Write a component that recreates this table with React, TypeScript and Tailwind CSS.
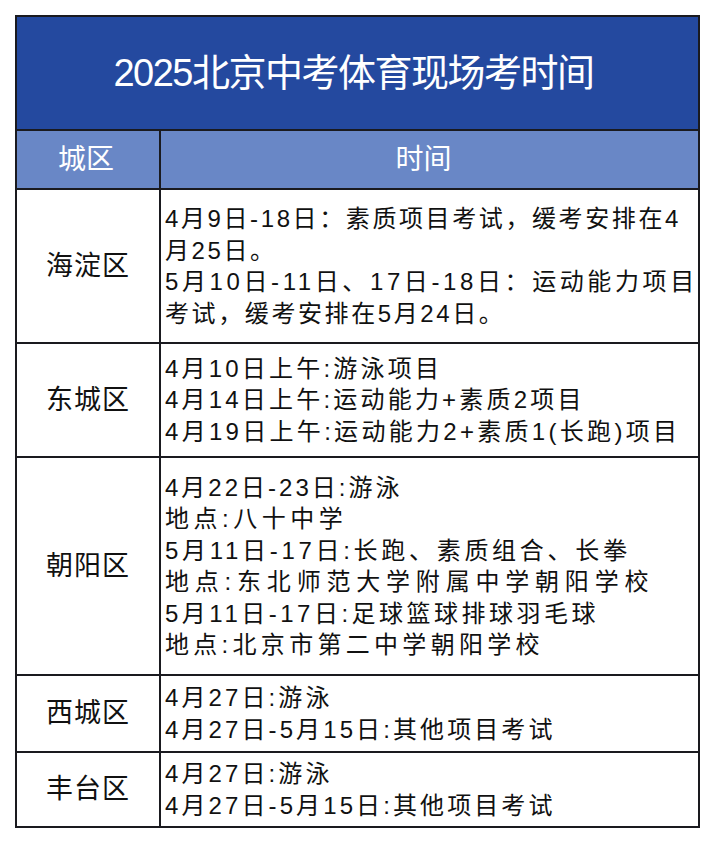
import React from "react";

type Line = [string, string];
type Row = { name: string; h: string; lines: Line[] };

const rows: Row[] = [
  {
    name: "海淀区",
    h: "h-[152px]",
    lines: [
      ["4月9日-18日：素质项目考试，缓考安排在4", "tracking-[2.6px]"],
      ["月25日。", "tracking-[2.6px]"],
      ["5月10日-11日、17日-18日：运动能力项目", "tracking-[3.6px]"],
      ["考试，缓考安排在5月24日。", "tracking-[2.6px]"],
    ],
  },
  {
    name: "东城区",
    h: "h-[112px]",
    lines: [
      ["4月10日上午:游泳项目", "tracking-[3.2px]"],
      ["4月14日上午:运动能力+素质2项目", "tracking-[3.2px]"],
      ["4月19日上午:运动能力2+素质1(长跑)项目", "tracking-[3.3px]"],
    ],
  },
  {
    name: "朝阳区",
    h: "h-[216px]",
    lines: [
      ["4月22日-23日:游泳", "tracking-[3px]"],
      ["地点:八十中学", "tracking-[4.5px]"],
      ["5月11日-17日:长跑、素质组合、长拳", "tracking-[3.7px]"],
      ["地点:东北师范大学附属中学朝阳学校", "tracking-[5.8px]"],
      ["5月11日-17日:足球篮球排球羽毛球", "tracking-[3.5px]"],
      ["地点:北京市第二中学朝阳学校", "tracking-[4.3px]"],
    ],
  },
  {
    name: "西城区",
    h: "h-[75px]",
    lines: [
      ["4月27日:游泳", "tracking-[3.1px]"],
      ["4月27日-5月15日:其他项目考试", "tracking-[3.1px]"],
    ],
  },
  {
    name: "丰台区",
    h: "h-[73px]",
    lines: [
      ["4月27日:游泳", "tracking-[3.1px]"],
      ["4月27日-5月15日:其他项目考试", "tracking-[3.1px]"],
    ],
  },
];

export default function App() {
  return (
    <div
      className="w-[716px] h-[844px] bg-white pt-[15px] pl-[15px]"
      style={{ fontFamily: '"Liberation Sans", "Noto Sans CJK SC", sans-serif' }}
    >
      <div className="w-[685px] bg-[#1a1a1f] p-[2px] grid grid-cols-[142px_1fr] gap-[2px]">
        <div className="col-span-2 h-[112px] bg-[#24499f] flex items-center justify-center text-white text-[38px] tracking-[-1.5px] pr-[8px]">
          2025北京中考体育现场考时间
        </div>
        <div className="h-[57px] bg-[#6987c6] flex items-center justify-center text-white text-[28px] pr-[4px]">
          城区
        </div>
        <div className="h-[57px] bg-[#6987c6] flex items-center justify-center text-white text-[28px] pr-[12px]">
          时间
        </div>
        {rows.map((r) => (
          <React.Fragment key={r.name}>
            <div
              className={`${r.h} bg-white flex items-center justify-center text-[27px] text-[#111] tracking-[1px]`}
            >
              {r.name}
            </div>
            <div
              className={`${r.h} bg-white flex flex-col justify-center pl-[4px] text-[24px] leading-[31.5px] text-[#111]`}
            >
              {r.lines.map(([t, c], i) => (
                <div key={i} className={`whitespace-nowrap ${c}`}>
                  {t}
                </div>
              ))}
            </div>
          </React.Fragment>
        ))}
      </div>
    </div>
  );
}
